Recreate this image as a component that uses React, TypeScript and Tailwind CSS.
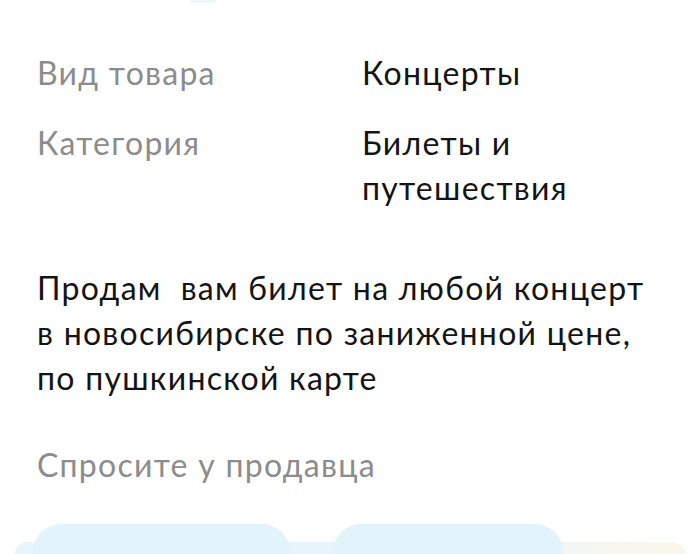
export default function App() {
  const font = { fontFamily: "Lato, 'Noto Sans', sans-serif" };
  return (
    <div className="w-[700px] h-[554px] overflow-hidden bg-white flex flex-col" style={font}>
      <div className="h-[50px] flex">
        <div className="ml-[190px] w-[26px] h-[3px] bg-[#eef6f8] rounded-b" />
      </div>

      <div className="px-[37px] text-[32px] leading-[45px] tracking-[0.04em]">
        <div className="flex">
          <div className="w-[325px] text-[#8c8c8c]">Вид товара</div>
          <div className="text-[#141414]">Концерты</div>
        </div>
        <div className="flex mt-[25px]">
          <div className="w-[325px] text-[#8c8c8c]">Категория</div>
          <div className="text-[#141414]">
            Билеты и
            <br />
            путешествия
          </div>
        </div>

        <p className="mt-[55px] text-[#141414] whitespace-pre">
          {"Продам  вам билет на любой концерт\nв новосибирске по заниженной цене,\nпо пушкинской карте"}
        </p>

        <div className="mt-[42px] text-[#8c8c8c]">Спросите у продавца</div>
      </div>

      <div className="mt-auto grid h-[30px]">
        <div className="col-start-1 row-start-1 self-end mx-[15px] h-[12px] rounded-t-[14px] bg-gradient-to-r from-[#e9f5fb] via-[#e6f4fb] to-[#fbf7ec]" />
        <div className="col-start-1 row-start-1 flex gap-[43px] pl-[33px]">
          <div className="w-[257px] h-[30px] rounded-t-[28px] bg-[#e3f3fb]" />
          <div className="w-[230px] h-[30px] rounded-t-[28px] bg-[#e3f3fb]" />
        </div>
      </div>
    </div>
  );
}
